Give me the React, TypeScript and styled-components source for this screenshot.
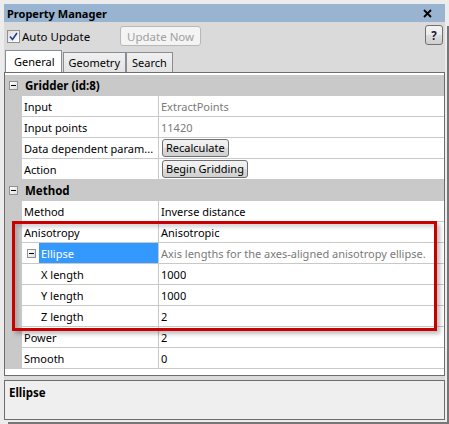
import React from "react";
import styled, { createGlobalStyle } from "styled-components";

const GlobalStyle = createGlobalStyle`
  html, body {
    margin: 0;
    padding: 0;
    background: #ececec;
  }
  body {
    font-family: "Noto Sans", "Open Sans", Arial, sans-serif;
    font-size: 11px;
    color: #000;
  }
  * {
    box-sizing: border-box;
  }
`;

const Frame = styled.div`
  width: 449px;
  height: 424px;
  padding: 4px 0 0 4px;
  background: #ececec;
  overflow: hidden;
`;

const TitleBar = styled.div`
  width: 441px;
  height: 18px;
  background: #99b4d1;
  display: flex;
  align-items: center;
  justify-content: space-between;
  padding: 0 13px 0 3px;
  font-weight: bold;
  font-size: 11px;
`;

const Body = styled.div`
  width: 441px;
  height: 398px;
  background: #dadada;
  display: flex;
  flex-direction: column;
  box-shadow: 2px 2px 0 #ececec, 4px 4px 0 #777777;
`;

const Toolbar = styled.div`
  height: 28px;
  display: flex;
  align-items: center;
  padding: 0 2px 0 3px;
`;

const CheckLabel = styled.label`
  width: 113px;
  display: flex;
  align-items: center;
  gap: 2px;
  font-size: 11.5px;
`;

const CheckBox = styled.span`
  width: 13px;
  height: 13px;
  border: 1px solid #8e8f8f;
  background: linear-gradient(135deg, #dcdcdc, #ffffff);
  display: flex;
  align-items: center;
  justify-content: center;
`;

const Button = styled.button<{ $disabled?: boolean }>`
  height: 20px;
  padding: 0 6px;
  font: inherit;
  font-size: 11.5px;
  border: 1px solid ${(p) => (p.$disabled ? "#b8b8b8" : "#707070")};
  border-radius: 3px;
  color: ${(p) => (p.$disabled ? "#a0a0a0" : "#000")};
  background: ${(p) =>
    p.$disabled
      ? "#f4f4f4"
      : "linear-gradient(#f2f2f2, #ebebeb 50%, #dddddd 50%, #cfcfcf)"};
`;

const HelpButton = styled(Button)`
  margin-left: auto;
  width: 18px;
  padding: 0;
  font-weight: bold;
  color: #1a1a3a;
  margin-top: -2px;
`;

const Tabs = styled.div`
  height: 22px;
  display: flex;
  align-items: flex-end;
  padding-left: 1px;
`;

const Tab = styled.div<{ $active?: boolean }>`
  height: ${(p) => (p.$active ? 22 : 20)}px;
  padding: ${(p) => (p.$active ? "0 6px 0 8px" : "0 5px")};
  display: flex;
  align-items: center;
  font-size: 11px;
  border: 1px solid #898c95;
  border-bottom: none;
  background: ${(p) => (p.$active ? "#ffffff" : "linear-gradient(#f0f0f0, #e3e3e3)")};
  margin-right: ${(p) => (p.$active ? 1 : 0)}px;
`;

const Grid = styled.div`
  height: 304px;
  border: 1px solid #6d6d6d;
  background: #ffffff;
  padding-top: 2px;
`;

const CategoryRow = styled.div`
  height: 21px;
  display: flex;
  align-items: center;
  background: #c9c9c9;
  font-weight: bold;
  font-size: 11.5px;
  padding-left: 4px;
  gap: 7px;
`;

const PropRow = styled.div`
  height: 21px;
  display: grid;
  grid-template-columns: 17px 137px 1fr;
`;

const Gutter = styled.div`
  background: #c9c9c9;
`;

const NameCell = styled.div<{ $indent?: boolean }>`
  display: flex;
  align-items: center;
  border-right: 1px solid #c9c9c9;
  border-bottom: 1px solid #c9c9c9;
  padding-left: ${(p) => (p.$indent ? 19 : 2)}px;
  white-space: nowrap;
  overflow: hidden;
`;

const ValueCell = styled.div<{ $muted?: boolean }>`
  display: flex;
  align-items: center;
  border-bottom: 1px solid #c9c9c9;
  padding-left: 2px;
  color: ${(p) => (p.$muted ? "#7a7a7a" : "#000")};
  white-space: nowrap;
  overflow: hidden;
`;

const CellButton = styled(Button)`
  height: 18px;
  padding: 0 3px;
  margin-left: 1px;
  margin-top: -1px;
  font-size: 11px;
`;

const Expander = styled.span<{ $inCell?: boolean }>`
  width: 9px;
  height: 9px;
  flex: none;
  border: 1px solid #919191;
  background: linear-gradient(135deg, #ffffff, #dedede);
  display: flex;
  align-items: center;
  justify-content: center;
  margin: ${(p) => (p.$inCell ? "0 3px 0 3px" : "0")};
  &::after {
    content: "";
    width: 5px;
    height: 1px;
    background: #000;
  }
`;

const Selected = styled.div`
  align-self: stretch;
  flex: 1;
  display: flex;
  align-items: center;
  padding-left: 2px;
  background: #3399ff;
  color: #fff;
`;

const HighlightGroup = styled.div`
  position: relative;
  &::after {
    content: "";
    position: absolute;
    left: 7px;
    right: 7px;
    top: -1px;
    bottom: -4px;
    border: 3px solid #c80000;
    box-shadow: 3px 3px 4px rgba(0, 0, 0, 0.25),
      inset 3px 3px 4px rgba(0, 0, 0, 0.18);
    pointer-events: none;
  }
`;

const Description = styled.div`
  margin-top: 4px;
  height: 40px;
  border: 1px solid #6d6d6d;
  background: #efefef;
  padding: 4px 4px;
  font-weight: bold;
  font-size: 11.5px;
`;

type Prop = {
  name: string;
  value: React.ReactNode;
  muted?: boolean;
  indent?: boolean;
};

function Row({ name, value, muted, indent }: Prop) {
  return (
    <PropRow>
      <Gutter />
      <NameCell $indent={indent}>{name}</NameCell>
      <ValueCell $muted={muted}>{value}</ValueCell>
    </PropRow>
  );
}

function Category({ label }: { label: string }) {
  return (
    <CategoryRow>
      <Expander />
      {label}
    </CategoryRow>
  );
}

const CloseIcon = () => (
  <svg width="9" height="9" viewBox="0 0 9 9">
    <path d="M1 1 L8 8 M8 1 L1 8" stroke="#000" strokeWidth="1.8" />
  </svg>
);

const CheckIcon = () => (
  <svg width="9" height="9" viewBox="0 0 9 9">
    <path d="M1 4.5 L3.5 7.5 L8 1" stroke="#1f3f8f" strokeWidth="1.6" fill="none" />
  </svg>
);

export default function App() {
  return (
    <Frame>
      <GlobalStyle />
      <TitleBar>
        <span>Property Manager</span>
        <CloseIcon />
      </TitleBar>
      <Body>
        <Toolbar>
          <CheckLabel>
            <CheckBox>
              <CheckIcon />
            </CheckBox>
            Auto Update
          </CheckLabel>
          <Button $disabled>Update Now</Button>
          <HelpButton>?</HelpButton>
        </Toolbar>
        <Tabs>
          <Tab $active>General</Tab>
          <Tab>Geometry</Tab>
          <Tab>Search</Tab>
        </Tabs>
        <Grid>
          <Category label="Gridder (id:8)" />
          <Row name="Input" value="ExtractPoints" muted />
          <Row name="Input points" value="11420" muted />
          <Row
            name="Data dependent param..."
            value={<CellButton>Recalculate</CellButton>}
          />
          <Row name="Action" value={<CellButton>Begin Gridding</CellButton>} />
          <Category label="Method" />
          <Row name="Method" value="Inverse distance" />
          <HighlightGroup>
            <Row name="Anisotropy" value="Anisotropic" />
            <PropRow>
              <Gutter />
              <NameCell>
                <Expander $inCell />
                <Selected>Ellipse</Selected>
              </NameCell>
              <ValueCell $muted>
                Axis lengths for the axes-aligned anisotropy ellipse.
              </ValueCell>
            </PropRow>
            <Row name="X length" value="1000" indent />
            <Row name="Y length" value="1000" indent />
            <Row name="Z length" value="2" indent />
          </HighlightGroup>
          <Row name="Power" value="2" />
          <Row name="Smooth" value="0" />
        </Grid>
        <Description>Ellipse</Description>
      </Body>
    </Frame>
  );
}
